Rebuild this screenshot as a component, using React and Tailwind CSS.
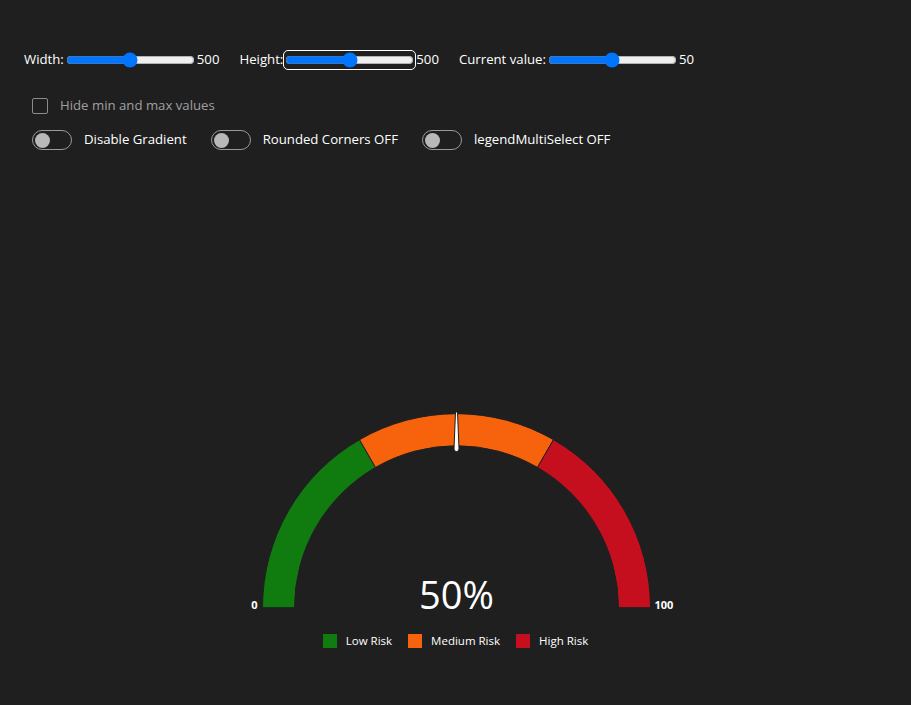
import React from "react";

const CX = 220.5;
const CY = 207.7;
const RO = 194;
const RI = 162;

function pt(v, r) {
  const a = Math.PI * (1 - v / 100);
  return [CX + r * Math.cos(a), CY - r * Math.sin(a)];
}

function seg(v0, v1) {
  const [x0, y0] = pt(v0, RO);
  const [x1, y1] = pt(v1, RO);
  const [x2, y2] = pt(v1, RI);
  const [x3, y3] = pt(v0, RI);
  return `M${x0},${y0} A${RO},${RO} 0 0 1 ${x1},${y1} L${x2},${y2} A${RI},${RI} 0 0 0 ${x3},${y3} Z`;
}

function Toggle({ label }) {
  return (
    <div className="flex items-center">
      <div className="w-10 h-5 rounded-full border border-[#9a9a9a] flex items-center px-[2px]">
        <div className="w-[15px] h-[15px] rounded-full bg-[#b8b8b8]" />
      </div>
      <span className="ml-3">{label}</span>
    </div>
  );
}

export default function App() {
  const font = { fontFamily: '"Open Sans", "Noto Sans", sans-serif' };
  return (
    <div className="min-h-screen bg-[#1f1f1f] text-white text-[13.2px]" style={font}>
      <div className="pt-[50px] pl-6 flex items-center h-[70px]">
        <span>Width:</span>
        <input type="range" min="0" max="1000" defaultValue="500" className="accent-[#0075ff] ml-[2px] mr-[2px]" />
        <span>500</span>
        <span className="ml-5">Height:</span>
        <input
          type="range"
          min="0"
          max="1000"
          defaultValue="500"
          className="accent-[#0075ff] ml-[2px] mr-[2px] outline-1 outline-white outline-offset-1 rounded-[3px]"
        />
        <span>500</span>
        <span className="ml-5">Current value:</span>
        <input type="range" min="0" max="100" defaultValue="50" className="accent-[#0075ff] ml-[2px] mr-[2px]" />
        <span>50</span>
      </div>
      <div className="mt-7 pl-8 flex items-center h-4">
        <div className="w-4 h-4 rounded-[2px] border border-[#8a8a8a]" />
        <span className="ml-3 text-[#a0a0a0]">Hide min and max values</span>
      </div>
      <div className="mt-4 pl-8 flex items-center h-5 gap-6">
        <Toggle label="Disable Gradient" />
        <Toggle label="Rounded Corners OFF" />
        <Toggle label="legendMultiSelect OFF" />
      </div>
      <div className="mt-[250px] flex justify-center">
        <svg width="440" height="220" viewBox="0 0 440 220">
          <path d={seg(0, 100 / 3)} fill="#107c10" stroke="#1f1f1f" strokeWidth="1" />
          <path d={seg(100 / 3, 200 / 3)} fill="#f7630c" stroke="#1f1f1f" strokeWidth="1" />
          <path d={seg(200 / 3, 100)} fill="#c50f1f" stroke="#1f1f1f" strokeWidth="1" />
          <path
            d={`M${CX - 1},12 L${CX + 1},12 L${CX + 2.5},49 A2.5,2.5 0 0 1 ${CX - 2.5},49 Z`}
            fill="#ffffff"
            stroke="#1f1f1f"
            strokeWidth="1"
          />
          <text x={CX} y="209" textAnchor="middle" fill="#ffffff" fontSize="38" fontWeight="500" fontFamily='"Open Sans", sans-serif'>
            50%
          </text>
          <text x="21.5" y="209" textAnchor="end" fill="#ffffff" fontSize="11" fontWeight="700" fontFamily='"Open Sans", sans-serif'>
            0
          </text>
          <text x="418.5" y="209" textAnchor="start" fill="#ffffff" fontSize="11" fontWeight="700" fontFamily='"Open Sans", sans-serif'>
            100
          </text>
        </svg>
      </div>
      <div className="mt-[14px] flex justify-center items-center gap-4 text-[11.5px] h-[14px]">
        <div className="flex items-center gap-[9px]">
          <div className="w-[14px] h-[14px] bg-[#107c10]" />
          <span>Low Risk</span>
        </div>
        <div className="flex items-center gap-[9px]">
          <div className="w-[14px] h-[14px] bg-[#f7630c]" />
          <span>Medium Risk</span>
        </div>
        <div className="flex items-center gap-[9px]">
          <div className="w-[14px] h-[14px] bg-[#c50f1f]" />
          <span>High Risk</span>
        </div>
      </div>
    </div>
  );
}
